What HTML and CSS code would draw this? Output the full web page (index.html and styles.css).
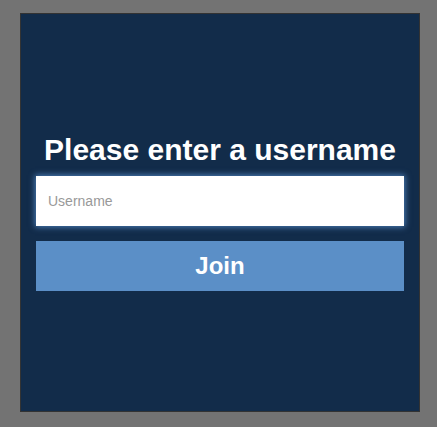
FILE: index.html
```html
<!DOCTYPE html>
<html>
<head>
<meta charset="utf-8">
<link rel="stylesheet" href="styles.css">
</head>
<body>
<div class="panel">
  <form class="form">
    <h1 class="title">Please enter a username</h1>
    <input class="field" type="text" placeholder="Username" autofocus>
    <button class="join" type="button">Join</button>
  </form>
</div>
</body>
</html>
```
FILE: styles.css
```css
html, body {
  margin: 0;
  padding: 0;
  background: #737373;
  font-family: "Liberation Sans", Arial, sans-serif;
}
body {
  padding: 13px 0 0 20px;
}
.panel {
  width: 398px;
  height: 397px;
  background: #122c4a;
  border: 1px solid #333;
  display: flex;
  align-items: center;
  justify-content: center;
}
.form {
  width: 368px;
  display: flex;
  flex-direction: column;
  margin-top: -6px;
}
.title {
  margin: 3px 0 8px;
  color: #fff;
  font-size: 30px;
  font-weight: bold;
  text-align: center;
  line-height: 36px;
}
.field {
  box-sizing: border-box;
  height: 50px;
  width: 100%;
  border: none;
  outline: none;
  padding: 0 12px;
  font-family: "Liberation Sans", Arial, sans-serif;
  font-size: 14px;
  background: #fff;
  box-shadow: 0 0 6px 1px #4d7fb8;
  margin: 0 0 15px;
}
.field::placeholder {
  color: #999;
}
.join {
  height: 50px;
  width: 100%;
  border: none;
  background: #5b8fc7;
  color: #fff;
  font-family: "Liberation Sans", Arial, sans-serif;
  font-size: 24px;
  font-weight: bold;
  padding: 0;
}
```
